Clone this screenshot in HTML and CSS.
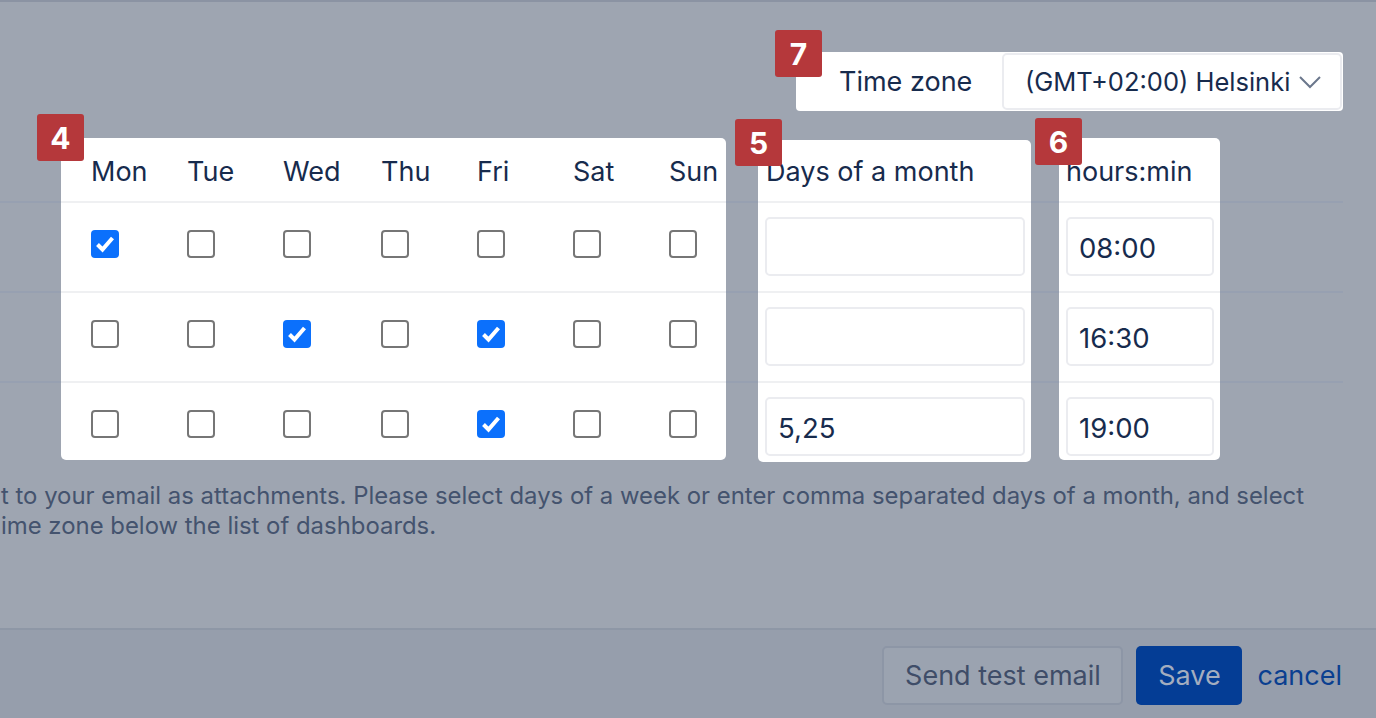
FILE: index.html
```html
<!DOCTYPE html>
<html>
<head>
<meta charset="utf-8">
<link rel="stylesheet" href="styles.css">
</head>
<body>
<div class="page">
  <div class="tz-row">
    <div class="tz-card">
      <span class="badge badge-tz">7</span>
      <span class="tz-label">Time zone</span>
      <div class="tz-select">
        <span>(GMT+02:00) Helsinki</span>
        <svg class="chev" width="24" height="14" viewBox="0 0 24 14"><polyline points="2,2 12,12 22,2" fill="none" stroke="#6b778c" stroke-width="2"/></svg>
      </div>
    </div>
  </div>

  <div class="schedule">
    <div class="card card-week">
      <span class="badge badge-week">4</span>
      <div class="week-head">
        <span>Mon</span><span>Tue</span><span>Wed</span><span>Thu</span><span>Fri</span><span>Sat</span><span>Sun</span>
      </div>
      <div class="week-row">
        <span class="cb on"><svg viewBox="0 0 28 28"><path d="M6.5 14.5l5 5L21.5 8" fill="none" stroke="#fff" stroke-width="4"/></svg></span>
        <span class="cb"></span><span class="cb"></span><span class="cb"></span><span class="cb"></span><span class="cb"></span><span class="cb"></span>
      </div>
      <div class="week-row">
        <span class="cb"></span><span class="cb"></span>
        <span class="cb on"><svg viewBox="0 0 28 28"><path d="M6.5 14.5l5 5L21.5 8" fill="none" stroke="#fff" stroke-width="4"/></svg></span>
        <span class="cb"></span>
        <span class="cb on"><svg viewBox="0 0 28 28"><path d="M6.5 14.5l5 5L21.5 8" fill="none" stroke="#fff" stroke-width="4"/></svg></span>
        <span class="cb"></span><span class="cb"></span>
      </div>
      <div class="week-row last">
        <span class="cb"></span><span class="cb"></span><span class="cb"></span><span class="cb"></span>
        <span class="cb on"><svg viewBox="0 0 28 28"><path d="M6.5 14.5l5 5L21.5 8" fill="none" stroke="#fff" stroke-width="4"/></svg></span>
        <span class="cb"></span><span class="cb"></span>
      </div>
    </div>

    <div class="card card-month">
      <span class="badge badge-month">5</span>
      <div class="col-head">Days of a month</div>
      <div class="col-row"><div class="field"></div></div>
      <div class="col-row"><div class="field"></div></div>
      <div class="col-row last"><div class="field">5,25</div></div>
    </div>

    <div class="card card-time">
      <span class="badge badge-time">6</span>
      <div class="col-head">hours:min</div>
      <div class="col-row"><div class="field">08:00</div></div>
      <div class="col-row"><div class="field">16:30</div></div>
      <div class="col-row last"><div class="field">19:00</div></div>
    </div>
  </div>

  <p class="hint">t to your email as attachments. Please select days of a week or enter comma separated days of a month, and select<br>ime zone below the list of dashboards.</p>
</div>

<footer class="footer">
  <button class="btn btn-default">Send test email</button>
  <button class="btn btn-primary">Save</button>
  <a class="cancel">cancel</a>
</footer>
</body>
</html>
```

FILE: styles.css
```css
html, body {
  margin: 0;
  padding: 0;
}
body {
  width: 1376px;
  height: 718px;
  overflow: hidden;
  background: #9ea5b1;
  font-family: Inter, "Noto Sans", sans-serif;
  color: #172b4d;
  border-top: 2px solid #8b93a3;
  box-sizing: border-box;
  display: flex;
  flex-direction: column;
}
.page {
  flex: 1;
}
.tz-row {
  display: flex;
  justify-content: flex-end;
  padding-right: 33px;
  margin-top: 50px;
}
.tz-card {
  position: relative;
  background: #fff;
  border-radius: 4px;
  height: 59px;
  display: flex;
  align-items: center;
  padding-left: 43px;
  box-sizing: border-box;
  width: 547px;
}
.tz-label {
  font-size: 27px;
  width: 163px;
}
.tz-select {
  flex: 1;
  height: 57px;
  border: 2px solid #ebecf0;
  border-radius: 5px;
  box-sizing: border-box;
  display: flex;
  align-items: center;
  padding-left: 21px;
  padding-right: 18px;
  justify-content: space-between;
  font-size: 25.5px;
  margin-right: 1px;
}
.chev {
  display: block;
}
.badge {
  position: absolute;
  width: 47px;
  height: 47px;
  background: #b5383b;
  color: #fff;
  border-radius: 3px;
  font-weight: 700;
  font-size: 30px;
  display: flex;
  align-items: center;
  justify-content: center;
}
.badge-tz { left: -21px; top: -22px; }
.badge-week { left: -24px; top: -24px; }
.badge-month { left: -23px; top: -21px; }
.badge-time { left: -24px; top: -20px; }

.schedule {
  margin-top: 27px;
  height: 324px;
  display: flex;
  align-items: flex-start;
  padding-left: 61px;
  background:
    linear-gradient(#97a0b1, #97a0b1) 0 63px / 1343px 2px no-repeat,
    linear-gradient(#97a0b1, #97a0b1) 0 153px / 1343px 2px no-repeat,
    linear-gradient(#97a0b1, #97a0b1) 0 243px / 1343px 2px no-repeat;
}
.card {
  position: relative;
  background: #fff;
  border-radius: 5px;
}
.card-week {
  width: 665px;
  height: 322px;
}
.week-head, .week-row {
  display: grid;
  grid-template-columns: 96px 96px 98px 96px 96px 96px auto;
  padding-left: 30px;
  border-bottom: 2px solid #eff0f2;
}
.week-head {
  height: 65px;
  box-sizing: border-box;
  align-items: center;
  font-size: 27px;
  padding-top: 3px;
}
.week-row {
  height: 90px;
  box-sizing: border-box;
  align-items: center;
  padding-bottom: 7px;
}
.week-row.last {
  border-bottom: 0;
  height: 77px;
  padding-bottom: 0;
  padding-top: 5px;
}
.cb {
  width: 28px;
  height: 28px;
  border: 2px solid #767676;
  border-radius: 4px;
  box-sizing: border-box;
  display: block;
}
.cb.on {
  background: #0b70fc;
  border: 0;
}
.cb svg {
  display: block;
  width: 28px;
  height: 28px;
}
.card-month {
  width: 273px;
  height: 322px;
  margin-left: 32px;
  margin-top: 2px;
}
.card-time {
  width: 161px;
  height: 322px;
  margin-left: 28px;
}
.col-head {
  height: 65px;
  box-sizing: border-box;
  border-bottom: 2px solid #eff0f2;
  display: flex;
  align-items: center;
  padding-left: 8px;
  padding-top: 3px;
  font-size: 27px;
}
.card-month .col-head {
  height: 63px;
  padding-top: 1px;
}
.card-time .col-head {
  padding-left: 7px;
}
.col-row {
  height: 90px;
  box-sizing: border-box;
  border-bottom: 2px solid #eff0f2;
  padding: 14px 6px 0 7px;
}
.col-row.last {
  border-bottom: 0;
}
.field {
  height: 59px;
  box-sizing: border-box;
  border: 2px solid #ebecf0;
  border-radius: 5px;
  display: flex;
  align-items: center;
  padding-left: 11px;
  padding-top: 2px;
  font-size: 27.5px;
}
.hint {
  margin: 19px 0 0 0;
  font-size: 23.9px;
  line-height: 30px;
  color: #44536e;
  padding-left: 1px;
}
.footer {
  height: 90px;
  box-sizing: border-box;
  border-top: 2px solid #8e97a6;
  background: #969eac;
  display: flex;
  align-items: flex-start;
  justify-content: flex-end;
  padding: 16px 34px 0 0;
}
.btn {
  height: 59px;
  border-radius: 5px;
  font-family: Inter, "Noto Sans", sans-serif;
  font-size: 27px;
  box-sizing: border-box;
  padding: 0;
  cursor: pointer;
}
.btn-default {
  width: 241px;
  border: 2px solid #8d96a6;
  background: #9ba3b0;
  color: #3f4d68;
}
.btn-primary {
  width: 106px;
  margin-left: 13px;
  border: 0;
  background: #043d95;
  color: #a3adbf;
}
.cancel {
  margin-left: 15px;
  font-size: 27px;
  color: #0a3f90;
  line-height: 59px;
}
```
